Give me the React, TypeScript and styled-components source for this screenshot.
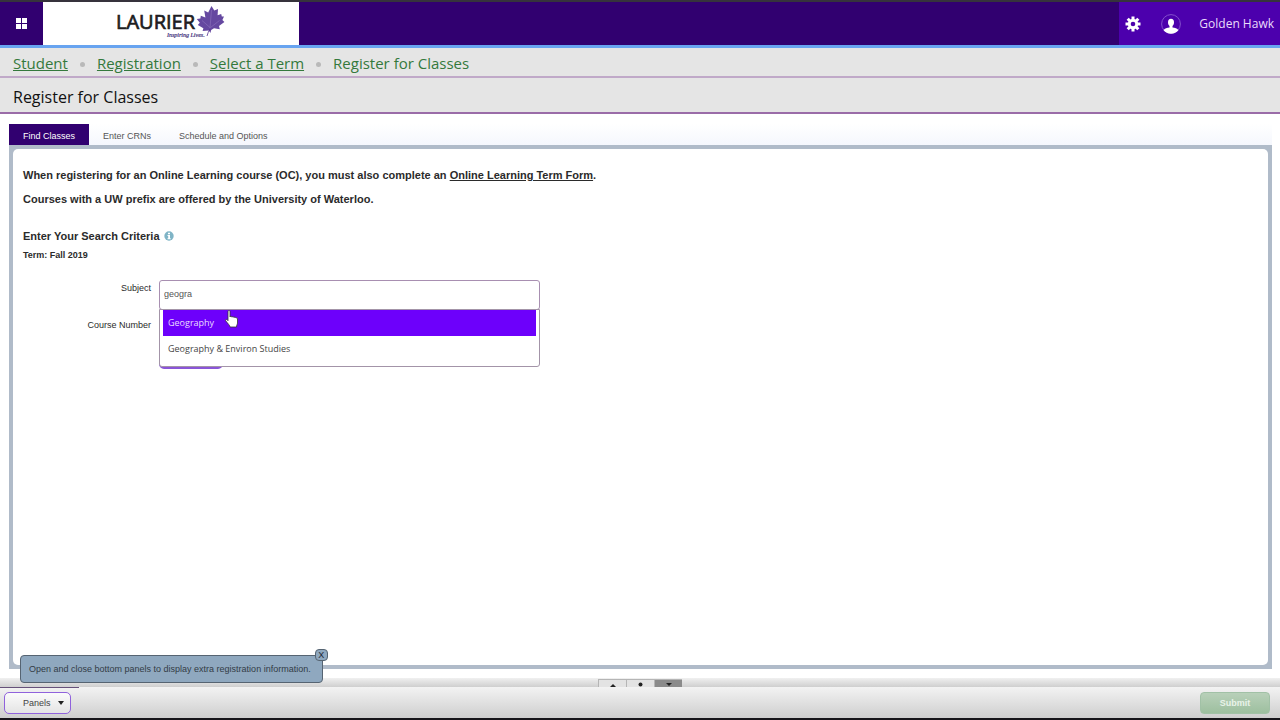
import React, { useState } from "react";
import styled, { createGlobalStyle } from "styled-components";

const sans = `"Liberation Sans", Arial, sans-serif`;
const open = `"Open Sans", "Noto Sans", sans-serif`;

const GlobalStyle = createGlobalStyle`
  *, *::before, *::after { box-sizing: border-box; }
  body { margin: 0; background: #fff; font-family: ${sans}; font-size: 9px; color: #2b2b2b; }
  button, input { font: inherit; color: inherit; margin: 0; }
  h1, h2, p, ol, ul { margin: 0; padding: 0; }
  ol, ul { list-style: none; }
`;

const Page = styled.div`
  min-height: 100vh;
  display: flex;
  flex-direction: column;
  border-top: 2px solid #36333c;
  border-bottom: 2px solid #17151a;
`;

const TopBar = styled.header`
  display: flex;
  height: 46px;
  background: #310070;
  border-bottom: 3px solid #68a4f0;
`;

const IconButton = styled.button<{ $width: number }>`
  width: ${(p) => p.$width}px;
  padding: 0;
  border: 0;
  background: transparent;
  display: flex;
  align-items: center;
  justify-content: center;
  cursor: pointer;
`;

const Logo = styled.a`
  width: 256px;
  background: #fff;
  display: flex;
  justify-content: center;
`;

const UserArea = styled.div`
  margin-left: auto;
  display: flex;
  align-items: center;
  align-self: stretch;
  background: #4c00ad;
  padding-right: 6px;
`;

const UserButton = styled.button`
  display: flex;
  align-items: center;
  gap: 18px;
  padding: 0;
  margin-left: 14px;
  border: 0;
  background: transparent;
  color: #eadcfb;
  font-family: ${open};
  font-size: 12px;
  font-weight: 500;
  white-space: nowrap;
`;

const Breadcrumbs = styled.ol`
  display: flex;
  align-items: center;
  height: 30px;
  padding: 2px 13px 0;
  background: #e5e5e5;
  border-bottom: 2px solid #c0a9c8;
  color: #34793c;
  font-family: ${open};
  font-size: 15px;
  line-height: 20px;
`;

const Crumb = styled.li`
  display: flex;
  align-items: center;

  & + &::before {
    content: "";
    width: 5px;
    height: 5px;
    margin: 3px 12px 0;
    border-radius: 50%;
    background: #b9b9b9;
  }

  a { color: inherit; }
`;

const TitleBar = styled.div`
  height: 36px;
  padding: 3px 13px 0;
  display: flex;
  align-items: center;
  background: #e5e5e5;
  border-bottom: 2px solid #9a6ca8;
`;

const Title = styled.h1`
  font: 500 16px/22px ${open};
  color: #111;
`;

const Main = styled.main`
  flex: 1;
  display: flex;
  flex-direction: column;
  padding: 10px 8px 9px 9px;
`;

const Tabs = styled.div`
  display: flex;
  background: linear-gradient(#fff, #f5f7fd);
`;

const Tab = styled.button<{ $active?: boolean }>`
  height: 21px;
  padding: 2px 14px 0;
  border: 0;
  line-height: 16px;
  background: ${(p) => (p.$active ? "#310070" : "transparent")};
  color: ${(p) => (p.$active ? "#fff" : "#555")};
`;

const PanelFrame = styled.section`
  flex: 1;
  display: flex;
  background: #b0bbc9;
  padding: 4px;
`;

const Panel = styled.div`
  flex: 1;
  background: #fff;
  border-radius: 5px;
  padding: 18px 10px;
`;

const Notice = styled.p`
  font-weight: 700;
  font-size: 11px;
  line-height: 16px;
  margin-bottom: 8px;
  a { color: inherit; }
`;

const CriteriaTitle = styled.h2`
  display: flex;
  align-items: center;
  gap: 4px;
  font-size: 11px;
  line-height: 16px;
  margin-top: 21px;
`;

const Term = styled.p`
  font-weight: 700;
  line-height: 14px;
  margin-top: 4px;
`;

const Form = styled.form`
  margin-top: 18px;
  display: flex;
  flex-direction: column;
  align-items: flex-start;
  gap: 7px;
`;

const Field = styled.div`
  display: flex;
  align-items: flex-start;
  gap: 8px;
`;

const Label = styled.label`
  width: 128px;
  text-align: right;
  line-height: 16px;
`;

const InputWrap = styled.div`
  position: relative;
`;

const TextInput = styled.input<{ $width: number }>`
  display: block;
  width: ${(p) => p.$width}px;
  height: 30px;
  padding: 0 4px 2px;
  border: 1px solid #a88fb1;
  border-radius: 3px;
  outline: 0;
  background: #fff;
  color: #555;
`;

const Menu = styled.ul`
  position: absolute;
  z-index: 2;
  top: 29px;
  left: 0;
  right: 0;
  padding: 0 3px 4px;
  background: #fff;
  border: 1px solid #a394a8;
  border-radius: 0 0 3px 3px;
`;

const Option = styled.li<{ $active?: boolean }>`
  padding: 0 5px;
  font-family: ${open};
  line-height: 26px;
  background: ${(p) => (p.$active ? "#6d00fb" : "#fff")};
  color: ${(p) => (p.$active ? "#eadcff" : "#444")};
`;

const Pointer = styled.svg`
  position: absolute;
  z-index: 3;
  left: 66px;
  top: 30px;
`;

const SearchButton = styled.button`
  width: 64px;
  height: 24px;
  margin-left: 136px;
  margin-top: -9px;
  border: 1px solid #8a55d8;
  border-bottom-width: 2px;
  border-radius: 5px;
  background: #f4f4f4;
`;

const Splitter = styled.div`
  display: flex;
  justify-content: center;
  height: 9px;
  background: linear-gradient(#f0f0f0, #cfcfcf);
`;

const SplitButton = styled.button<{ $dark?: boolean }>`
  width: 28px;
  height: 8px;
  margin-top: 1px;
  padding: 0;
  display: flex;
  align-items: flex-end;
  justify-content: center;
  border: 1px solid #b5b5b5;
  border-width: 1px 0 0 1px;
  background: ${(p) => (p.$dark ? "#8b8b8b" : "#e3e3e3")};
`;

const Footer = styled.footer`
  position: relative;
  display: flex;
  align-items: center;
  justify-content: space-between;
  height: 31px;
  padding: 0 10px 0 4px;
  background: linear-gradient(#f3f3f3, #cecece);

  &::before {
    content: "";
    position: absolute;
    top: 0;
    left: 0;
    width: 79px;
    height: 1px;
    background: #66517a;
  }
`;

const PanelsButton = styled.button`
  display: flex;
  align-items: center;
  gap: 7px;
  height: 22px;
  padding: 0 6px 0 18px;
  border: 1px solid #9062dc;
  border-radius: 5px;
  background: linear-gradient(#fbfbfb, #e4e4e4);
  color: #444;
`;

const Submit = styled.button`
  width: 70px;
  height: 22px;
  padding: 0;
  border: 1px solid #a1c1a6;
  border-radius: 4px;
  background: linear-gradient(#b8d0b9, #9dbf9f);
  color: #e9f3e9;
  font-weight: 700;
`;

const Tip = styled.div`
  position: absolute;
  left: 20px;
  bottom: 35px;
  height: 28px;
  padding: 0 11px 0 8px;
  border: 1px solid #566472;
  border-radius: 4px;
  background: #8fa8bf;
  color: #333c46;
  line-height: 26px;
  white-space: nowrap;
`;

const TipClose = styled.button`
  position: absolute;
  right: -6px;
  top: -7px;
  width: 13px;
  height: 12px;
  padding: 0;
  border: 1px solid #566472;
  border-radius: 4px;
  background: #8fa8bf;
  color: #1c2733;
  line-height: 10px;
`;

const LaurierLogo = () => (
  <svg width="108" height="38" viewBox="0 0 108 38" role="img" aria-label="Laurier, Inspiring Lives">
    <text x="-1" y="27" fontFamily="Open Sans, sans-serif" fontSize="20" fill="#1d1d1f" stroke="#1d1d1f" strokeWidth="0.7">LAURIER</text>
    <path
      fill="#6548a0"
      d="M94.500 4l2.800 4.600 3.700-1.600-.4 6.300 3.600-1.300.6 2.400 2.200.2-1.600 3.400 2 2-5.400 4 .8 3.200-5.800-1-2.800 1.800-.8 3-1.600-2.600-6.200.6.800-2.800-5.600-3.200 2-2.200-3-3.800 3.600-.6.400-2.600 4.600 1.800-1.200-7 4 1.800z"
    />
    <path fill="none" stroke="#8d74bd" strokeWidth="0.6" d="M94.500 8l-1.500 18M93 25.500l-8-7M93.500 25.500l9-7" />
    <path fill="none" stroke="#54318f" strokeWidth="0.8" d="M93 27q-2 3-3 7" />
    <text x="50" y="35" fontFamily="Liberation Serif, serif" fontStyle="italic" fontSize="6" fill="#41307a" stroke="#41307a" strokeWidth="0.2">Inspiring Lives.</text>
  </svg>
);

const Gear = () => (
  <svg width="16" height="16" viewBox="-8 -8 16 16" aria-hidden="true">
    {[0, 45, 90, 135].map((a) => (
      <rect key={a} x="-1.5" y="-7.5" width="3" height="15" fill="#fff" transform={`rotate(${a})`} />
    ))}
    <circle r="5.2" fill="#fff" />
    <circle r="2.3" fill="#4c00ad" />
  </svg>
);

const Avatar = () => (
  <svg width="20" height="20" viewBox="0 0 20 20" aria-hidden="true">
    <circle cx="10" cy="10" r="9.4" fill="none" stroke="#8450cc" />
    <path
      fill="#fff"
      d="M10 4.800c-2 0-3 1.400-3 3.400 0 1.800.6 3 1.500 3.800v1.600c-2.200.4-5 .9-5.900 2.700C4.400 18.500 7 19.800 10 19.800s5.600-1.300 7.400-3.500c-.9-1.800-3.700-2.300-5.900-2.700V12c.9-.8 1.500-2 1.500-3.800 0-2-1-3.400-3-3.400z"
    />
  </svg>
);

export default function App() {
  const [subject, setSubject] = useState("geogra");
  return (
    <Page>
      <GlobalStyle />
      <TopBar>
        <IconButton $width={43} aria-label="Menu">
          <svg width="11" height="11" viewBox="0 0 11 11" fill="#fff" aria-hidden="true">
            <path d="M0 0h5v5H0zM6 0h5v5H6zM0 6h5v5H0zM6 6h5v5H6z" />
          </svg>
        </IconButton>
        <Logo href="#"><LaurierLogo /></Logo>
        <UserArea>
          <IconButton $width={28} aria-label="Settings"><Gear /></IconButton>
          <UserButton><Avatar />Golden Hawk</UserButton>
        </UserArea>
      </TopBar>
      <nav aria-label="Breadcrumb">
        <Breadcrumbs>
          <Crumb><a href="#">Student</a></Crumb>
          <Crumb><a href="#">Registration</a></Crumb>
          <Crumb><a href="#">Select a Term</a></Crumb>
          <Crumb>Register for Classes</Crumb>
        </Breadcrumbs>
      </nav>
      <TitleBar><Title>Register for Classes</Title></TitleBar>
      <Main>
        <Tabs role="tablist">
          <Tab role="tab" aria-selected $active>Find Classes</Tab>
          <Tab role="tab">Enter CRNs</Tab>
          <Tab role="tab">Schedule and Options</Tab>
        </Tabs>
        <PanelFrame>
          <Panel>
            <Notice>
              When registering for an Online Learning course (OC), you must also complete an{" "}
              <a href="#">Online Learning Term Form</a>.
            </Notice>
            <Notice>Courses with a UW prefix are offered by the University of Waterloo.</Notice>
            <CriteriaTitle>
              Enter Your Search Criteria
              <svg width="10" height="10" viewBox="0 0 10 10" aria-hidden="true">
                <circle cx="5" cy="5" r="4.700" fill="#7fb4c6" />
                <path fill="#fff" d="M4 1.700h2v1.500H4zM3.500 4H6v3.200h.7v1H3.500v-1h.7V5h-.7z" />
              </svg>
            </CriteriaTitle>
            <Term>Term: Fall 2019</Term>
            <Form onSubmit={(e) => e.preventDefault()}>
              <Field>
                <Label htmlFor="subject">Subject</Label>
                <InputWrap>
                  <TextInput id="subject" $width={381} value={subject} onChange={(e) => setSubject(e.target.value)} />
                  <Menu role="listbox" aria-label="Subjects">
                    <Option role="option" aria-selected $active>Geography</Option>
                    <Option role="option" aria-selected={false}>Geography &amp; Environ Studies</Option>
                  </Menu>
                  <Pointer width="13" height="18" viewBox="0 0 13 18" aria-hidden="true">
                    <path
                      fill="#fff"
                      stroke="#333"
                      strokeWidth="0.8"
                      d="M3 1.500c0-1.300 2-1.300 2 0V7c.2-1 1.900-.9 2 .2.300-.9 1.900-.7 2 .4.400-.8 1.900-.5 2 .5.500-.5 1.500-.2 1.500.8V13c0 1.500-1 2-1 4H5c0-1.500-2-3.200-4.300-6.200-.7-1.200.6-1.900 1.500-1l.8.9z"
                    />
                  </Pointer>
                </InputWrap>
              </Field>
              <Field>
                <Label htmlFor="course">Course Number</Label>
                <TextInput id="course" $width={120} />
              </Field>
              <SearchButton type="submit" aria-label="Search" />
            </Form>
          </Panel>
        </PanelFrame>
      </Main>
      <Splitter>
        <SplitButton aria-label="Expand panel">
          <svg width="6" height="4" viewBox="0 0 6 4" aria-hidden="true"><path d="M0 4l3-3 3 3z" fill="#222" /></svg>
        </SplitButton>
        <SplitButton aria-label="Restore panels">
          <svg width="5" height="5" viewBox="0 0 5 5" aria-hidden="true"><circle cx="2.500" cy="2.500" r="2" fill="#222" /></svg>
        </SplitButton>
        <SplitButton $dark aria-label="Collapse panel">
          <svg width="6" height="4" viewBox="0 0 6 4" aria-hidden="true"><path d="M0 0h6L3 3z" fill="#222" /></svg>
        </SplitButton>
      </Splitter>
      <Footer>
        <PanelsButton>
          Panels
          <svg width="6" height="4" viewBox="0 0 6 4" aria-hidden="true"><path d="M0 0h6L3 4z" fill="#222" /></svg>
        </PanelsButton>
        <Submit disabled>Submit</Submit>
        <Tip role="tooltip">
          Open and close bottom panels to display extra registration information.
          <TipClose aria-label="Close tip">X</TipClose>
        </Tip>
      </Footer>
    </Page>
  );
}
